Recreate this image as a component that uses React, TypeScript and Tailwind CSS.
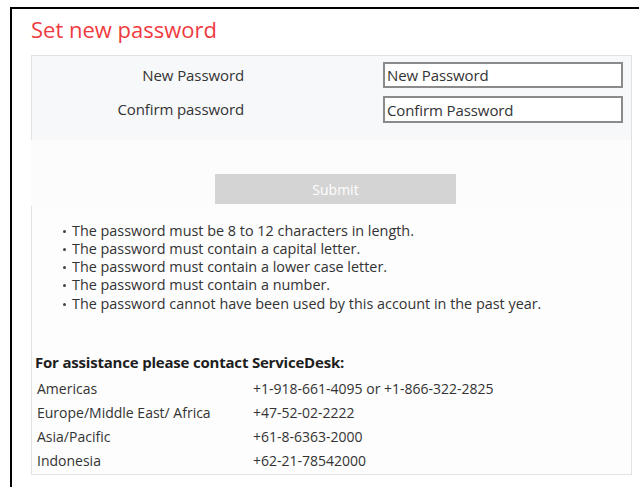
import React from "react";

const rules = [
  "The password must be 8 to 12 characters in length.",
  "The password must contain a capital letter.",
  "The password must contain a lower case letter.",
  "The password must contain a number.",
  "The password cannot have been used by this account in the past year.",
];

const contacts: [string, string][] = [
  ["Americas", "+1-918-661-4095 or +1-866-322-2825"],
  ["Europe/Middle East/ Africa", "+47-52-02-2222"],
  ["Asia/Pacific", "+61-8-6363-2000"],
  ["Indonesia", "+62-21-78542000"],
];

export default function App() {
  return (
    <div className="min-h-[487px] bg-white pl-[10px] pt-[7px] font-['Open_Sans',sans-serif]">
      <div className="h-[480px] border-l-2 border-t-2 border-black pl-[19px] pt-[5px]">
        <h1 className="h-[41px] text-[22px] leading-[30px] text-[#ef3b3f]">Set new password</h1>

        <div className="w-[601px] border border-[#e2e2e2] bg-[#fdfdfd]">
          {/* credentials */}
          <div className="flex h-[84px] flex-col gap-[8px] bg-[#f7f8fa] pt-[6px]">
            <div className="flex h-[26px] items-center">
              <span className="w-[212px] text-right text-[15px] tracking-[-0.1px] text-[#333]">New Password</span>
              <input
                readOnly
                value="New Password"
                className="ml-[139px] h-[26px] w-[240px] border-2 border-[#8a8a8a] bg-white px-[2px] text-[15px] tracking-[-0.1px] text-[#333] outline-none"
              />
            </div>
            <div className="flex h-[27px] items-center">
              <span className="w-[212px] text-right text-[15px] tracking-[-0.1px] text-[#333]">Confirm password</span>
              <input
                readOnly
                value="Confirm Password"
                className="ml-[139px] h-[27px] w-[240px] border-2 border-[#8a8a8a] bg-white px-[2px] text-[15px] tracking-[-0.1px] text-[#333] outline-none"
              />
            </div>
          </div>

          {/* submit row */}
          <div className="-ml-px flex h-[66px] items-start bg-[#fcfcfc] pt-[34px]">
            <button className="ml-[184px] h-[30px] w-[241px] bg-[#d4d4d4] text-[14px] text-white">Submit</button>
          </div>

          {/* rules */}
          <ul className="pl-[31px] pt-[16px] text-[14.4px] leading-[18px] text-[#333]">
            {rules.map((r, i) => (
              <li key={r} className={"flex items-center " + (i === 4 ? "mt-px" : "")}>
                <span className="mr-[6px] h-[3px] w-[3px] shrink-0 rounded-full bg-[#444]" />
                <span>{r}</span>
              </li>
            ))}
          </ul>

          {/* contacts */}
          <div className="px-[3px] pt-[37px] pb-[2px] text-[14px] text-[#333]">
            <div className="mb-[2px] h-[24px] text-[15px] font-bold leading-[24px] tracking-[-0.2px] text-[#1e1e1e]">
              For assistance please contact ServiceDesk:
            </div>
            {contacts.map(([region, phone]) => (
              <div key={region} className="flex h-[24px] items-center">
                <span className="w-[218px] pl-[2px]">{region}</span>
                <span>{phone}</span>
              </div>
            ))}
          </div>
        </div>
      </div>
    </div>
  );
}
